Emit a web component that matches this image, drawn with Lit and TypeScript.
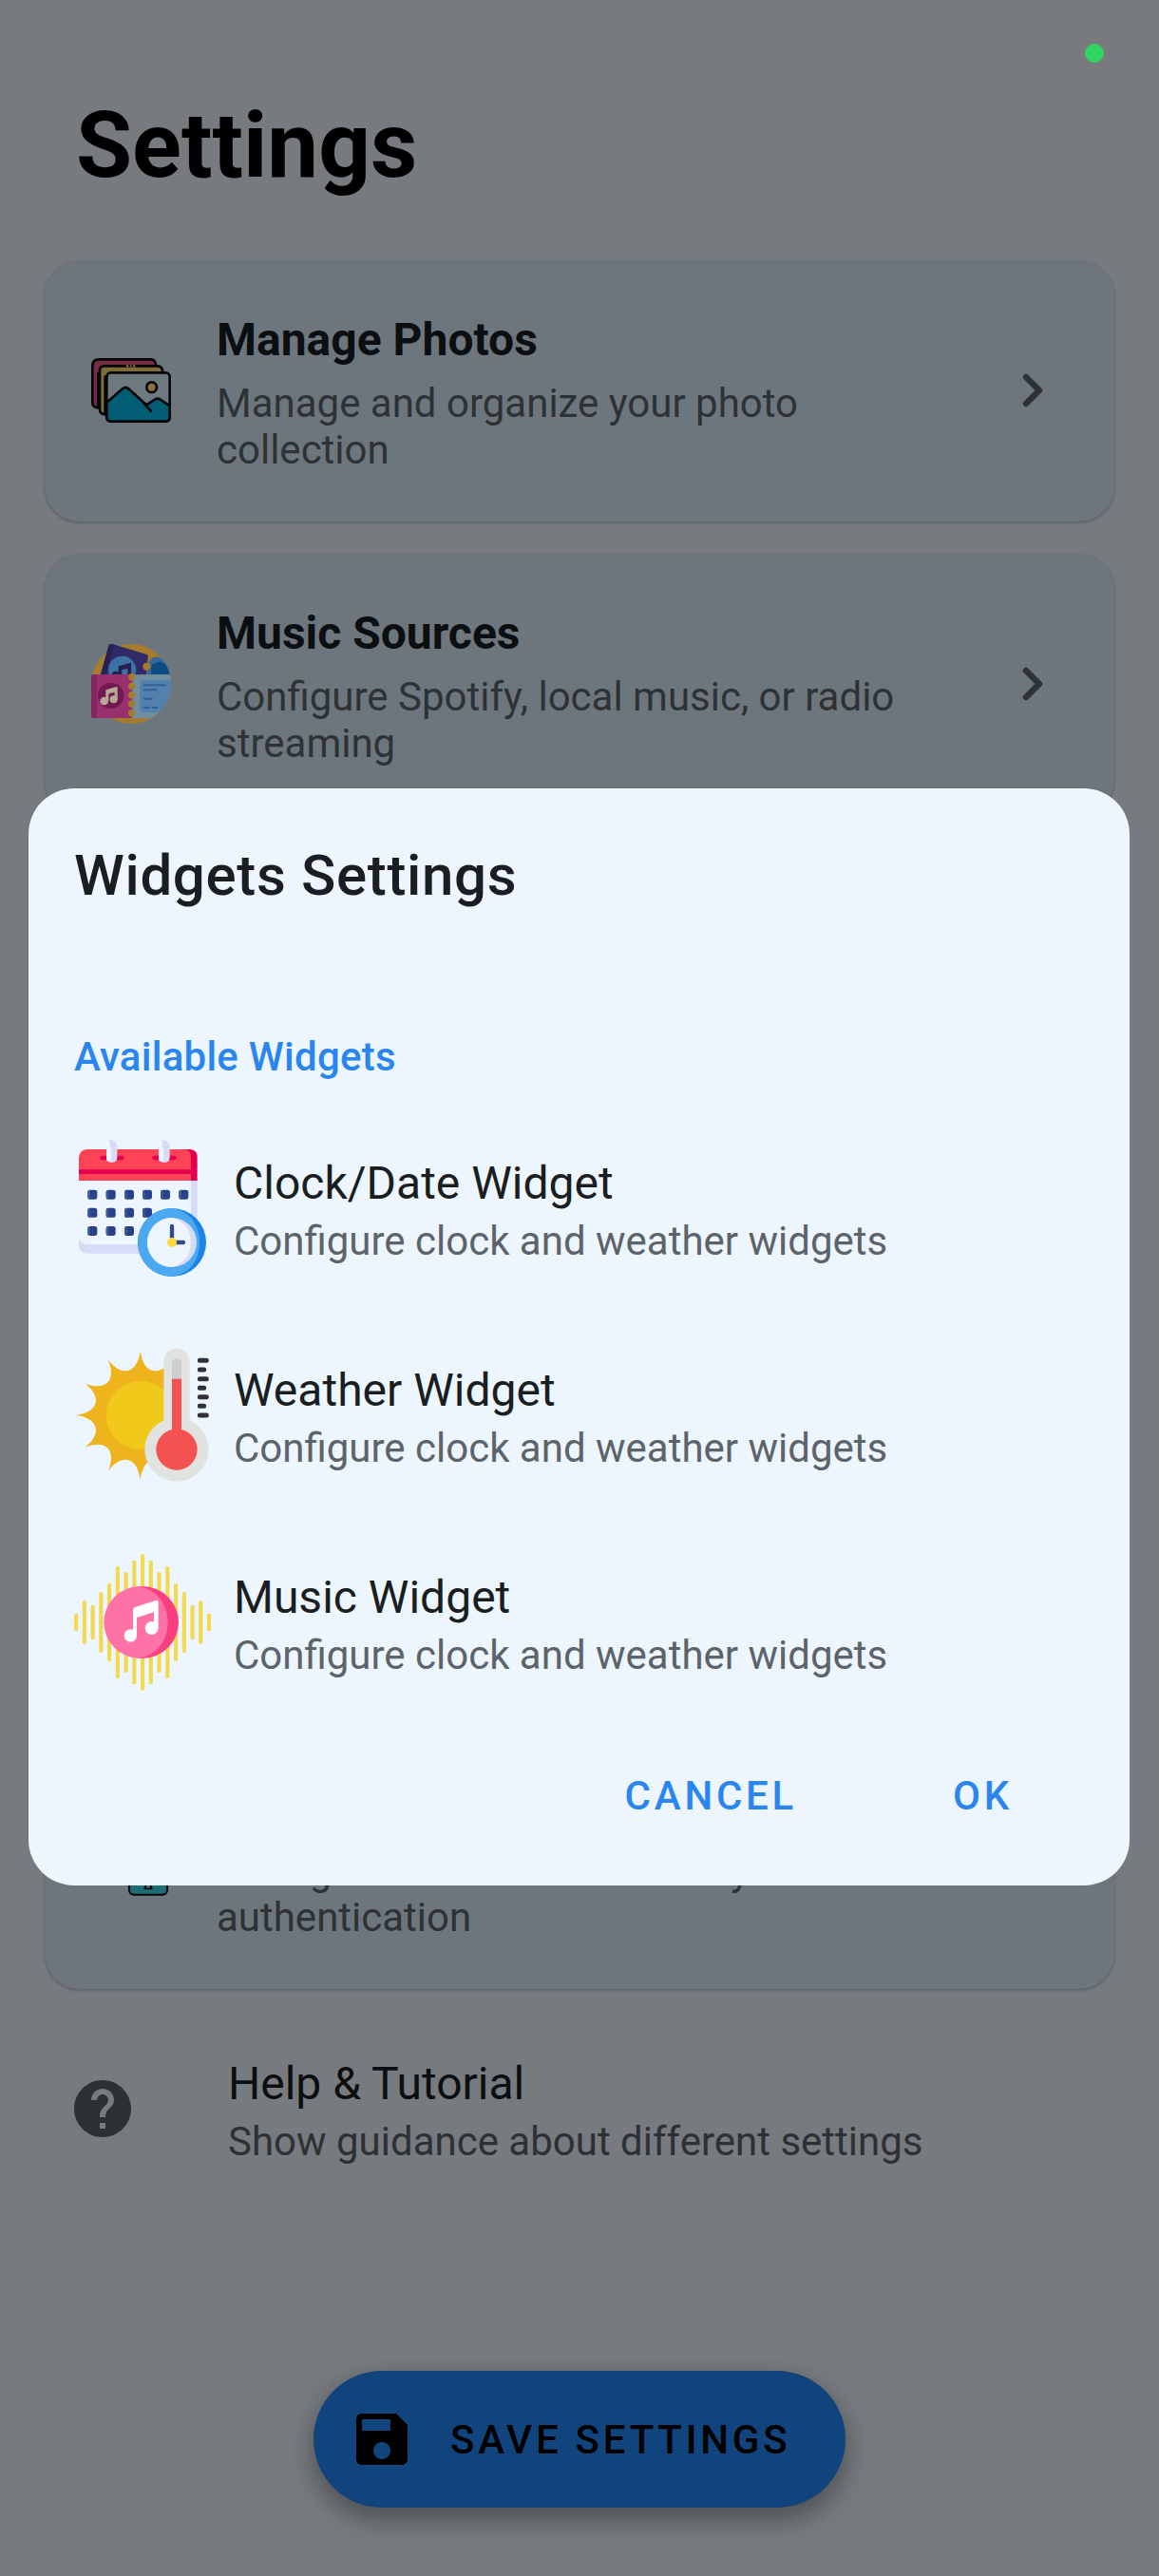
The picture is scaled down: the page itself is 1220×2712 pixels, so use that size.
import { LitElement, html, css, svg, nothing } from 'lit';
import type { TemplateResult } from 'lit';
import { customElement, property } from 'lit/decorators.js';

const photosIcon = html`
  <svg viewBox="48 57 252 252">
    <g stroke="#050607" stroke-width="8" stroke-linejoin="round">
      <path fill="#762c42" d="M70 238Q52 236 52 222V106Q52 85 73 85H236Q250 85 252 102V130H70Z" />
      <path fill="#7e6c3a" d="M92 259Q75 257 75 242V120Q75 106 89 106H258Q272 106 273 122V140H92Z" />
      <rect x="97" y="127" width="199" height="154" rx="13" fill="#6e797f" />
      <path fill="#005d74" d="M97 221 147 178Q156 169 166 178L222 229 250 211Q258 206 266 212L296 232V268Q296 281 283 281H110Q97 281 97 268Z" />
      <path fill="none" stroke-linecap="round" d="M215 224 236 248" />
      <circle cx="239" cy="173" r="16" fill="#8b7040" />
    </g>
    <path d="M159 106h7M171 106h4M180 106h7" stroke="#95683c" stroke-width="7" />
  </svg>
`;

const musicSourcesIcon = html`
  <svg viewBox="48 54 252 252">
    <defs>
      <clipPath id="disc"><path d="M48 54H174A126 126 0 0 1 174 306H48Z" /></clipPath>
    </defs>
    <circle cx="174" cy="180" r="126" fill="#a67b2e" />
    <g clip-path="url(#disc)">
      <path fill="#35699b" d="M224 151Q222 120 236 102Q246 92 258 95L300 106V151Z" />
      <path fill="#0b4c84" d="M238 151V128Q238 113 252 115Q261 105 273 113Q288 116 300 128V151Z" />
      <path fill="#2e2b66" d="M78 151 103 60Q106 52 115 54L225 88Q229 91 227 98L222 151Z" />
      <path fill="#252253" d="M78 151 103 60Q106 52 115 54L121 56 94 151Z" />
      <circle cx="223" cy="125" r="12" fill="#a67b2e" />
      <circle cx="146" cy="136" r="44" fill="#3f72a4" />
      <path fill="#252253" d="M134 124 174 113V151H163V131L145 136V151H134Z" />
      <ellipse cx="127" cy="149" rx="13" ry="9" fill="#252253" />
      <path fill="#6f8ea0" d="M165 151H300V288H165Z" />
      <path fill="#5281ad" d="M213 168H300V270H213Q202 270 202 259V179Q202 168 213 168Z" />
      <path stroke="#2d6298" stroke-width="6" stroke-linecap="round" d="M215 184H282M215 199H255M215 227H240M215 255H230M241 255H256" />
      <path fill="#99306e" d="M58 150H178V288H58Q48 288 48 278V160Q48 150 58 150Z" />
      <path fill="#822561" d="M58 150H66V288H58Q48 288 48 278V160Q48 150 58 150Z" />
    </g>
    <g fill="#a67b2e">
      <circle cx="176" cy="158" r="11" />
      <circle cx="176" cy="187" r="11" />
      <circle cx="176" cy="215" r="11" />
      <circle cx="176" cy="243" r="11" />
      <circle cx="176" cy="272" r="11" />
    </g>
    <circle cx="110" cy="217" r="41" fill="#711951" />
    <g fill="#b9a799">
      <path d="M94 199 128 189Q131 189 131 193V229H122V206L103 211V235H94Z" />
      <circle cx="89" cy="234" r="13" />
      <circle cx="119" cy="229" r="12" />
    </g>
  </svg>
`;

const securityIcon = html`
  <svg viewBox="168 -138 252 252">
    <rect x="288" y="-20" width="120" height="124" rx="14" fill="#1d6e76" stroke="#050607" stroke-width="6" />
    <path d="M343 50V70L337 85H359L353 70V50Z" fill="#566f75" stroke="#050607" stroke-width="5" />
  </svg>
`;

const calendarDots = [
  [112, 170, 228, 285, 342, 400],
  [112, 170, 228, 285],
  [112, 170, 228],
];

const calendarIcon = html`
  <svg viewBox="54 60 432 432">
    <path fill="#d6dbf6" d="M69 180H443V395Q443 419 419 419H95Q69 417 69 391Z" />
    <path fill="#edf6ff" d="M69 180H423V390H91Q75 388 69 370Z" />
    <path fill="#e4004f" d="M95 90H420Q443 92 443 114V189H95Z" />
    <path fill="#ff4356" d="M95 90H402Q423 92 423 114V189H69V116Q71 92 95 90Z" />
    <path fill="#e4004f" d="M69 154H424V168H69Z" />
    <path stroke="#e4004f" stroke-width="13" stroke-linecap="round" d="M142 117H206M307 117H371" />
    <g fill="#d6dbf6">
      <path d="M164 60Q190 60 190 84V115Q190 132 173 132Q156 132 156 115V84H166Q169 70 164 60Z" />
      <path d="M329 60Q356 60 356 84V115Q356 132 339 132Q321 132 321 115V84H331Q335 70 329 60Z" />
    </g>
    <path stroke="#f1f6fd" stroke-width="15" stroke-linecap="round" d="M164 90V121M329 90V121" />
    ${calendarDots.map((row, i) =>
      row.map(
        (x) => svg`
          <rect x=${x - 15} y=${218 + i * 57.5} width="30" height="30" rx="8" fill="#27418a" />
          <path d="M${x - 7} ${218 + i * 57.5}v30q-8 0-8-8v-14q0-8 8-8z" fill="#3f5896" />
        `,
      ),
    )}
    <circle cx="363" cy="384" r="108" fill="#1d83e4" />
    <path fill="#4ba9f1" d="M363 276A108 108 0 0 0 363 492C420 484 450 440 450 384C450 330 420 284 363 276Z" />
    <circle cx="363" cy="384" r="78" fill="#d6dbf6" />
    <path fill="#edf6ff" d="M363 306A78 78 0 0 0 363 462C402 452 422 422 422 384C422 346 402 316 363 306Z" />
    <path stroke="#2f4a85" stroke-width="13" stroke-linecap="round" fill="none" d="M363 333V384H399" />
    <circle cx="363" cy="384" r="15" fill="#ffd83f" />
  </svg>
`;

/** Outline of the twelve-pointed sun, with concave edges between the tips. */
const sunRays = (): string => {
  const at = (deg: number, r: number) => {
    const a = (deg * Math.PI) / 180;
    return `${(263 + r * Math.sin(a)).toFixed(1)} ${(270 - r * Math.cos(a)).toFixed(1)}`;
  };
  let d = `M${at(0, 203)}`;
  for (let deg = 0; deg < 360; deg += 30) {
    d += `C${at(deg + 4, 132)} ${at(deg + 26, 132)} ${at(deg + 30, 203)}`;
  }
  return `${d}Z`;
};

const weatherIcon = html`
  <svg viewBox="54 54 432 432">
    <defs>
      <clipPath id="left"><rect x="54" y="54" width="324" height="432" /></clipPath>
    </defs>
    <g clip-path="url(#left)">
      <path d=${sunRays()} fill="#efb31d" />
      <circle cx="263" cy="270" r="108" fill="#f1c91b" />
    </g>
    <g fill="#e1e3e0">
      <rect x="337" y="59" width="82" height="320" rx="41" />
      <circle cx="378" cy="378" r="101" />
    </g>
    <path fill="#cdcecd" d="M363 160V105A15 15 0 0 1 393 105V160Z" />
    <path fill="#f35250" d="M363 155H393V330H363Z" />
    <circle cx="378" cy="378" r="65" fill="#f35250" />
    <path stroke="#302f3b" stroke-width="15" stroke-linecap="round"
      d="M451 97H472M451 126H464M451 155H472M451 184H464M451 212H472M451 241H464M451 270H472" />
  </svg>
`;

const waveTops = [236, 195, 209, 168, 141, 87, 105, 68, 48, 68, 105, 87, 141, 168, 209, 195, 236];

const musicIcon = html`
  <svg viewBox="54 48 432 432">
    ${waveTops.map(
      (top, i) => svg`
        <rect x=${54 + i * 26.25} y=${top} width="12.5" height=${(264 - top) * 2} rx="6.2" fill="#f3d94f" />
      `,
    )}
    <circle cx="270" cy="264" r="114" fill="#f83f7f" />
    <path fill="#ff72a6" d="M262 150A114 114 0 0 0 262 378C318 364 350 318 350 264C350 210 318 164 262 150Z" />
    <g fill="#fff">
      <path d="M240 224Q240 219 245 217L313 194Q320 193 320 200V282H306V232L252 249V306H240Z" />
      <circle cx="232" cy="306" r="20" />
      <circle cx="299" cy="282" r="21" />
    </g>
  </svg>
`;

const helpIcon = html`
  <svg viewBox="0 0 24 24" fill="currentColor">
    <path d="M12 2C6.48 2 2 6.48 2 12s4.48 10 10 10 10-4.48 10-10S17.52 2 12 2zm1 17h-2v-2h2v2zm2.07-7.75l-.9.92C13.45 12.9 13 13.5 13 15h-2v-.5c0-1.1.45-2.1 1.17-2.83l1.24-1.26c.37-.36.59-.86.59-1.41 0-1.1-.9-2-2-2s-2 .9-2 2H8c0-2.21 1.79-4 4-4s4 1.79 4 4c0 .88-.36 1.68-.93 2.25z" />
  </svg>
`;

const saveIcon = html`
  <svg viewBox="0 0 24 24" fill="currentColor">
    <path d="M17 3H5c-1.11 0-2 .9-2 2v14c0 1.1.89 2 2 2h14c1.1 0 2-.9 2-2V7l-4-4zm-5 16c-1.66 0-3-1.34-3-3s1.34-3 3-3 3 1.34 3 3-1.34 3-3 3zm3-10H5V5h10v4z" />
  </svg>
`;

const chevronIcon = html`
  <svg viewBox="0 0 72 72" fill="none" stroke="currentColor" stroke-width="6.4" stroke-linecap="round" stroke-linejoin="round">
    <path d="M28 22 42 36 28 50" />
  </svg>
`;

/** One tappable card of the settings list. */
@customElement('settings-card')
export class SettingsCard extends LitElement {
  @property()
  heading = '';

  @property()
  description = '';

  @property({ attribute: false })
  icon: TemplateResult | typeof nothing = nothing;

  static override styles = css`
    :host {
      display: flex;
      align-items: center;
      box-sizing: border-box;
      height: 274px;
      padding: 0 49px;
      border-radius: 37px;
      background: #6d767d;
      box-shadow: 0 2px 3px rgba(50, 56, 62, 0.3), 0 0 2px rgba(70, 78, 84, 0.35);
    }

    .icon {
      flex: none;
      width: 84px;
      height: 84px;
      margin-bottom: 2px;
    }

    .text {
      flex: 1;
      margin: 4px 60px 0 48px;
    }

    .heading {
      color: #0c0f11;
      font-size: 48px;
      font-weight: 700;
      line-height: 56px;
    }

    .description {
      margin-top: 14px;
      color: #2e3235;
      font-size: 42px;
      line-height: 49px;
    }

    .chevron {
      flex: none;
      width: 72px;
      height: 72px;
      margin-bottom: 2px;
      color: #2e3235;
    }

    svg {
      display: block;
      width: 100%;
      height: 100%;
    }
  `;

  override render() {
    return html`
      <div class="icon">${this.icon}</div>
      <div class="text">
        <div class="heading">${this.heading}</div>
        <div class="description">${this.description}</div>
      </div>
      <div class="chevron">${chevronIcon}</div>
    `;
  }
}

interface WidgetEntry {
  name: string;
  icon: TemplateResult;
}

const widgets: WidgetEntry[] = [
  { name: 'Clock/Date Widget', icon: calendarIcon },
  { name: 'Weather Widget', icon: weatherIcon },
  { name: 'Music Widget', icon: musicIcon },
];

/** Dialog that lists the widgets which can be configured. */
@customElement('widgets-dialog')
export class WidgetsDialog extends LitElement {
  static override styles = css`
    :host {
      display: flex;
      flex-direction: column;
      box-sizing: border-box;
      padding: 57px 48px 0;
      border-radius: 48px;
      background: #edf5ff;
      color: #1a1e20;
    }

    h2 {
      margin: 0;
      font-size: 60px;
      font-weight: 500;
      line-height: 70px;
      letter-spacing: 0.65px;
    }

    h3 {
      margin: 131px 0 0;
      color: #2a86ee;
      font-size: 42px;
      font-weight: 500;
      line-height: 49px;
      letter-spacing: 0.25px;
    }

    .list {
      display: flex;
      flex-direction: column;
      gap: 74px;
      margin-top: 63px;
    }

    .row {
      display: flex;
      align-items: center;
      gap: 24px;
      height: 144px;
    }

    .icon {
      width: 144px;
      height: 144px;
    }

    .icon svg {
      display: block;
      width: 100%;
      height: 100%;
    }

    .text {
      margin-top: 4px;
    }

    .name {
      font-size: 48px;
      line-height: 56px;
    }

    .hint {
      margin-top: 8px;
      color: #5c6469;
      font-size: 42px;
      line-height: 49px;
    }

    .actions {
      display: flex;
      justify-content: flex-end;
      gap: 164px;
      margin-top: 86px;
      padding-right: 75px;
    }

    button {
      padding: 0;
      border: 0;
      background: none;
      color: #2a86ee;
      font: 500 42px/49px Roboto, sans-serif;
      letter-spacing: 3.75px;
    }
  `;

  override render() {
    return html`
      <h2>Widgets Settings</h2>
      <h3>Available Widgets</h3>
      <div class="list">
        ${widgets.map(
          (widget) => html`
            <div class="row">
              <div class="icon">${widget.icon}</div>
              <div class="text">
                <div class="name">${widget.name}</div>
                <div class="hint">Configure clock and weather widgets</div>
              </div>
            </div>
          `,
        )}
      </div>
      <div class="actions">
        <button>CANCEL</button>
        <button>OK</button>
      </div>
    `;
  }
}

@customElement('app-root')
export class AppRoot extends LitElement {
  static override styles = css`
    :host {
      display: block;
      position: relative;
      box-sizing: border-box;
      width: 1220px;
      height: 2712px;
      padding: 97px 47px 0;
      overflow: hidden;
      background: #777a7e;
      font-family: Roboto, sans-serif;
    }

    h1 {
      margin: 0 0 66px 33px;
      color: #000;
      font-size: 96px;
      font-weight: 700;
      line-height: 112px;
    }

    .cards {
      display: flex;
      flex-direction: column;
      gap: 35px;
    }

    /* rows that sit entirely behind the dialog */
    .covered {
      height: 892px;
    }

    .help {
      display: flex;
      align-items: center;
      gap: 96px;
      margin: 72px 25px 0;
      color: #2e3133;
    }

    .help svg {
      width: 72px;
      height: 72px;
      margin-bottom: 6px;
    }

    .help-title {
      color: #0c0f10;
      font-size: 48px;
      line-height: 56px;
    }

    .help-hint {
      margin-top: 8px;
      font-size: 42px;
      line-height: 49px;
    }

    .privacy-dot {
      position: absolute;
      top: 46px;
      left: 1142px;
      width: 20px;
      height: 20px;
      border-radius: 50%;
      background: #30d562;
    }

    .save {
      position: absolute;
      bottom: 72px;
      left: 330px;
      display: flex;
      align-items: center;
      box-sizing: border-box;
      width: 560px;
      height: 144px;
      padding: 0 36px;
      gap: 36px;
      border: 0;
      border-radius: 72px;
      background: #11447c;
      box-shadow: 0 14px 26px rgba(40, 42, 44, 0.42), 0 4px 22px rgba(40, 42, 44, 0.15);
      color: #000;
      font: 500 42px/49px Roboto, sans-serif;
      letter-spacing: 3.75px;
      white-space: nowrap;
    }

    .save svg {
      flex: none;
      width: 72px;
      height: 72px;
    }

    widgets-dialog {
      position: absolute;
      top: 830px;
      left: 30px;
      width: 1159px;
      height: 1155px;
    }
  `;

  override render() {
    return html`
      <h1>Settings</h1>
      <div class="cards">
        <settings-card
          heading="Manage Photos"
          description="Manage and organize your photo collection"
          .icon=${photosIcon}
        ></settings-card>
        <settings-card
          heading="Music Sources"
          description="Configure Spotify, local music, or radio streaming"
          .icon=${musicSourcesIcon}
        ></settings-card>
        <div class="covered"></div>
        <settings-card
          heading="Security"
          description="Configure access and security authentication"
          .icon=${securityIcon}
        ></settings-card>
      </div>
      <div class="help">
        ${helpIcon}
        <div>
          <div class="help-title">Help &amp; Tutorial</div>
          <div class="help-hint">Show guidance about different settings</div>
        </div>
      </div>
      <button class="save">${saveIcon} SAVE SETTINGS</button>
      <div class="privacy-dot"></div>
      <widgets-dialog></widgets-dialog>
    `;
  }
}
